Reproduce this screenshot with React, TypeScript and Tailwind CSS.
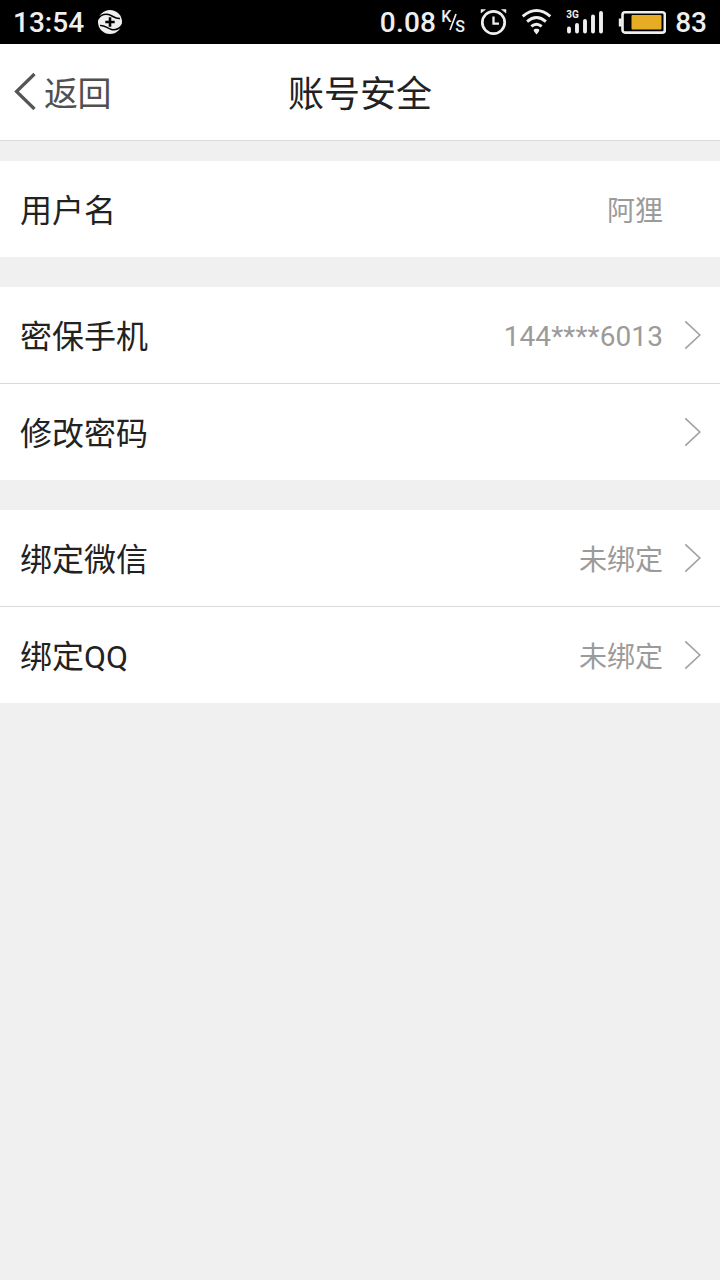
import React from "react";

type RowProps = { label: string; value?: string; arrow?: boolean };

function Chevron() {
  return (
    <svg className="ml-[21px] h-8 w-[18px] shrink-0" viewBox="0 0 18 32" fill="none" stroke="#a3a3a3" strokeWidth="1.7">
      <path d="M1.300 2.300 15.800 16 1.300 29.700" />
    </svg>
  );
}

function Row({ label, value, arrow = true }: RowProps) {
  return (
    <div className="flex h-24 items-center bg-white pl-5 pr-[18px]">
      <span className="flex-1 pt-[3px] text-[32px] leading-[48px] text-[#222222]">{label}</span>
      {value && (
        <span className={`${/^\d/.test(value) ? "pt-1 tracking-[0.08px]" : "pt-[5px]"} text-[28px] leading-[42px] text-[#9b9b9b]`}>
          {value}
        </span>
      )}
      {arrow ? <Chevron /> : <span className="w-[39px]" />}
    </div>
  );
}

function Group({ children }: { children: React.ReactNode }) {
  return (
    <section className="mb-[30px] [&>*+*]:h-[97px] [&>*+*]:border-t [&>*+*]:border-[#d9d9d9]">{children}</section>
  );
}

function StatusBar() {
  return (
    <div className="flex h-11 items-center bg-black text-[28px] font-medium leading-[44px] text-[#efefef]">
      <span className="ml-[13px] w-[84px] pt-px">13:54</span>
      <svg className="h-[26px] w-[26px]" viewBox="0 0 26 26">
        <circle cx="13" cy="13" r="12" fill="#efefef" />
        <path d="M0 11C3 6.500 7 4.500 11.500 5.500c4.500 1 6 4.500 11.500 4M3 16.500c5-.5 7 3 11.500 4 4.500 1 8.500-1 11.500-5.500" fill="none" stroke="#000" strokeWidth="1.500" />
        <path d="M0 8.500 3.500 6 2.500 9 0 12zM26 17.500 22.500 20 23.500 17 26 14z" fill="#000" />
        <path d="M13 8.300v9.400M8.300 13h9.400" stroke="#000" strokeWidth="2.600" />
      </svg>
      <span className="ml-auto pt-px tracking-[0.2px]">0.08</span>
      <span className="ml-[5px] flex h-11 w-[26px] text-[16px] leading-none">
        <span className="mt-[9px]">K</span>
        <svg className="-ml-0.5 mt-[13px] h-[18px] w-[8px] shrink-0" viewBox="0 0 8 18" stroke="#efefef" strokeWidth="1.700">
          <path d="M7 1 1 17" />
        </svg>
        <span className="-ml-0.5 mt-[19px]">S</span>
      </span>
      <svg className="ml-[13px] h-[28px] w-[28px]" viewBox="0 0 28 28" fill="none" stroke="#efefef">
        <circle cx="13.500" cy="14.500" r="11.200" strokeWidth="2.700" />
        <path d="M13.500 8.500v7.200h5.500" strokeWidth="2.300" />
        <path d="M1 5V1.500H5.500ZM26 5V1.500H21.500Z" fill="#efefef" strokeWidth=".5" />
      </svg>
      <svg className="ml-[14px] h-[28px] w-[30px]" viewBox="0 0 30 28" fill="none" stroke="#efefef" strokeWidth="2.900">
        <path d="M.7 8.400Q14.500-3.400 28.300 8.400M5.100 13.600Q14.500 5.500 23.900 13.600M9.300 18.400Q14.500 14.100 19.700 18.400" />
        <path d="M14.500 20.800c3 0 3.500 1.600 2 3.200L14.500 26.500l-2-2.500c-1.500-1.600-1-3.200 2-3.200Z" fill="#efefef" stroke="none" />
      </svg>
      <span className="relative ml-[14px] block h-[28px] w-[38px]">
        <svg className="h-[28px] w-[38px]" viewBox="0 0 38 28">
          <path d="M3 23.500v-3M11 23.500V17M19 23.500V13M27 23.500V8.500M35 23.500V5" stroke="#efefef" strokeWidth="3.900" strokeLinecap="round" />
        </svg>
        <span className="absolute left-0 top-0.5 text-[10px] font-bold leading-[10px]">3G</span>
      </span>
      <svg className="ml-[14px] h-[26px] w-[48px]" viewBox="0 0 48 26">
        <rect x="4.500" y="3.200" width="42.300" height="20.400" rx="2.500" fill="none" stroke="#efefef" strokeWidth="2.600" />
        <path d="M.8 9.500h3v8h-3z" fill="#efefef" />
        <rect x="13.500" y="6" width="30" height="14.500" rx="1" fill="#e6ad24" />
      </svg>
      <span className="ml-[9px] mr-[13px] pt-px">83</span>
    </div>
  );
}

export default function App() {
  return (
    <div className="min-h-screen bg-[#f0f0f0] font-['Roboto','Noto_Sans_CJK_SC',sans-serif]">
      <StatusBar />
      <header className="mb-5 grid h-[97px] grid-cols-3 items-center border-b border-[#d9d9d9] bg-white">
        <button className="flex items-center text-[34px] leading-[50px] text-[#505050]">
          <svg className="ml-[13px] mr-[7px] h-10 w-6 shrink-0" viewBox="0 0 24 40" fill="none" stroke="#555" strokeWidth="3.200">
            <path d="M21.500 2 3.500 19.500 21.500 37" />
          </svg>
          <span className="pt-1 tracking-[-0.5px]">返回</span>
        </button>
        <h1 className="pt-[5px] text-center text-[36px] leading-[52px] text-[#222222]">账号安全</h1>
      </header>
      <main>
        <Group>
          <Row label="用户名" value="阿狸" arrow={false} />
        </Group>
        <Group>
          <Row label="密保手机" value="144****6013" />
          <Row label="修改密码" />
        </Group>
        <Group>
          <Row label="绑定微信" value="未绑定" />
          <Row label="绑定QQ" value="未绑定" />
        </Group>
      </main>
    </div>
  );
}
